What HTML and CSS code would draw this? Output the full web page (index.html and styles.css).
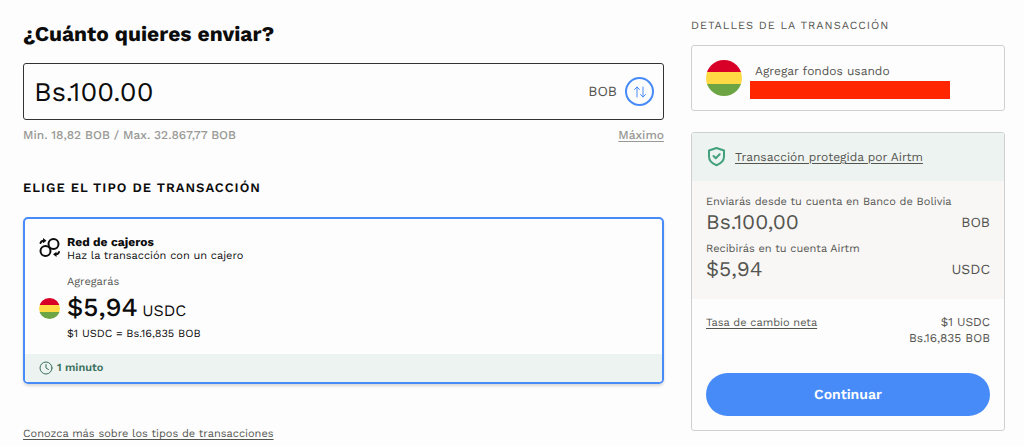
FILE: index.html
```html
<!DOCTYPE html>
<html lang="es">

<head>
    <meta charset="UTF-8">
    <meta name="viewport" content="width=device-width, initial-scale=1.0">
    <title>Agregar fondos</title>
    <link rel="stylesheet" href="styles.css">
</head>

<body>
    <form class="page">
        <main class="send">
            <h1><label for="amount">¿Cuánto quieres enviar?</label></h1>
            <div class="amount-box">
                <input type="text" id="amount" class="amount-input" value="Bs.100.00">
                <span class="currency">BOB</span>
                <button type="button" class="swap" aria-label="Cambiar moneda">
                    <svg width="14" height="14" viewBox="0 0 14 14">
                        <path d="M4 12V2M1.500 4.500L4 2l2.500 2.500M10 2v10M7.500 9.500L10 12l2.500-2.500" />
                    </svg>
                </button>
            </div>
            <div class="hint">
                <span>Min. 18,82 BOB / Max. 32.867,77 BOB</span>
                <a href="#">Máximo</a>
            </div>

            <h2 class="type-title">Elige el tipo de transacción</h2>
            <!-- tipo de transacción -->
            <label class="option">
                <input type="radio" name="type" class="option-radio" checked>
                <span class="option-body">
                    <svg class="network" width="22" height="22" viewBox="0 0 22 22">
                        <circle cx="14.500" cy="6" r="5" />
                        <circle cx="6.500" cy="13" r="5" />
                        <path d="M1.500 5C2 3.500 3 2.700 4.500 2.700M20 14c-.5 1.500-1.500 2.300-3 2.300" />
                        <path class="solid" d="M4 0L7.500 2.700 4 5.300zM17.500 13.700L14 16.300l3.500 2.700z" />
                    </svg>
                    <span class="option-name">
                        <strong>Red de cajeros</strong>
                        <span>Haz la transacción con un cajero</span>
                    </span>
                    <span class="add-label">Agregarás</span>
                    <span class="flag"></span>
                    <span class="add-amount">$5,94 <small>USDC</small></span>
                    <span class="rate">$1 USDC = Bs.16,835 BOB</span>
                </span>
                <span class="option-time">
                    <svg width="14" height="14" viewBox="0 0 14 14">
                        <circle cx="7" cy="7" r="6" />
                        <path d="M7 3.500V7l2.500 1.500" />
                    </svg>
                    1 minuto
                </span>
            </label>
            <a href="#" class="more">Conozca más sobre los tipos de transacciones</a>
        </main>

        <aside class="details">
            <h2 class="details-title">Detalles de la transacción</h2>
            <div class="card method">
                <span class="flag flag-lg"></span>
                <div class="method-text">
                    <p>Agregar fondos usando</p>
                    <div class="account"></div>
                </div>
            </div>

            <div class="card">
                <div class="protected">
                    <svg width="20" height="20" viewBox="0 0 20 20">
                        <path d="M10.500 1L18 3.500v6c0 4.500-3.500 7.200-7.500 8.800C6.500 16.700 3 14 3 9.500v-6z" />
                        <path d="M7.500 9l2.200 2.200L13.700 7.300" />
                    </svg>
                    <a href="#">Transacción protegida por Airtm</a>
                </div>
                <div class="summary">
                    <p class="summary-label">Enviarás desde tu cuenta en Banco de Bolivia</p>
                    <p class="summary-row"><span>Bs.100,00</span> <small>BOB</small></p>
                    <p class="summary-label">Recibirás en tu cuenta Airtm</p>
                    <p class="summary-row"><span>$5,94</span> <small>USDC</small></p>
                </div>
                <div class="confirm">
                    <div class="net-rate">
                        <a href="#">Tasa de cambio neta</a>
                        <p>$1 USDC<br>Bs.16,835 BOB</p>
                    </div>
                    <button type="button" class="continue">Continuar</button>
                </div>
            </div>
        </aside>
    </form>
</body>

</html>
```
FILE: styles.css
```css
* {
    margin: 0;
    padding: 0;
    box-sizing: border-box;
}

body {
    background: #fdfdfd;
    color: #0c0c0c;
    font-family: "Work Sans", Inter, "Liberation Sans", sans-serif;
    font-size: 11px;
    line-height: 16px;
    text-rendering: geometricPrecision;
}

a {
    color: inherit;
    text-underline-offset: 2px;
}

button,
input {
    font-family: inherit;
    text-rendering: inherit;
}

svg {
    fill: none;
    stroke: currentColor;
    stroke-linecap: round;
    stroke-linejoin: round;
}

.page {
    display: grid;
    grid-template-columns: minmax(0, 1fr) 314px;
    gap: 27px;
    align-items: start;
    padding: 0 19px 0 23px;
}

.send {
    padding-top: 21px;
}

h1 {
    margin-bottom: 14px;
    font-size: 21px;
    font-weight: 700;
    line-height: 28px;
}

.amount-box {
    display: flex;
    align-items: center;
    height: 57px;
    padding: 0 9px 0 10px;
    border: 1px solid #333;
    border-radius: 3px;
}

.amount-input {
    flex: 1;
    min-width: 0;
    border: 0;
    outline: none;
    background: none;
    color: #0c0c0c;
    font-size: 27px;
}

.currency {
    margin-right: 8px;
    color: #555550;
    font-size: 14px;
}

.swap {
    display: flex;
    align-items: center;
    justify-content: center;
    width: 29px;
    height: 29px;
    border: 2px solid #478bf9;
    border-radius: 50%;
    background: none;
    color: #478bf9;
}

.hint {
    display: flex;
    justify-content: space-between;
    margin-top: 7px;
    color: #999995;
    font-size: 12px;
    font-weight: 500;
}

.type-title {
    margin: 36px 0 18px;
    font-size: 13px;
    font-weight: 600;
    line-height: 20px;
    letter-spacing: 1px;
    text-transform: uppercase;
}

.option {
    display: block;
    position: relative;
    border: 2px solid #478bf9;
    border-radius: 5px;
    box-shadow: 0 2px 3px rgba(0, 0, 0, .15);
    overflow: hidden;
    cursor: pointer;
}

.option-radio {
    position: absolute;
    opacity: 0;
}

.option-body {
    display: grid;
    grid-template-columns: 22px 1fr;
    column-gap: 6px;
    align-items: center;
    padding: 16px 14px 13px;
    line-height: 14px;
}

.network {
    stroke-width: 2;
}

.network .solid {
    fill: currentColor;
    stroke: none;
}

.option-name strong,
.option-name span {
    display: block;
}

.option-name strong {
    font-size: 12px;
    font-weight: 700;
}

.add-label {
    grid-column: 2;
    margin-top: 12px;
    color: #555550;
}

.add-amount {
    margin-top: 3px;
    font-size: 26px;
    font-weight: 500;
    line-height: 32px;
}

.add-amount small {
    margin-left: -4px;
    font-size: 16px;
    font-weight: 400;
}

.rate {
    grid-column: 2;
}

.flag {
    width: 21px;
    height: 21px;
    border-radius: 50%;
    background: linear-gradient(#d80027 33.3%, #ffda44 33.3% 66.6%, #6da544 66.6%);
}

.flag-lg {
    width: 36px;
    height: 36px;
}

.option-time {
    display: flex;
    align-items: center;
    gap: 4px;
    height: 28px;
    padding: 0 14px;
    background: #edf3f1;
    color: #38705c;
    font-weight: 600;
}

.more {
    display: inline-block;
    margin-top: 42px;
    color: #555550;
}

.details {
    padding-top: 18px;
    color: #555550;
}

.details-title {
    margin-bottom: 11px;
    font-size: 11px;
    font-weight: 400;
    line-height: 16px;
    letter-spacing: 1px;
    text-transform: uppercase;
}

.card {
    border: 1px solid #d0d0d0;
    border-radius: 3px;
    overflow: hidden;
}

.method {
    display: flex;
    align-items: flex-start;
    gap: 8px;
    height: 66px;
    margin-bottom: 21px;
    padding: 14px;
}

.method-text {
    flex: 1;
    padding-top: 3px;
    font-size: 12px;
}

.method-text p {
    padding-left: 5px;
}

.account {
    width: 200px;
    height: 18px;
    margin-top: 2px;
    background: #ff2600;
}

.protected {
    display: flex;
    align-items: center;
    gap: 9px;
    height: 48px;
    padding: 0 14px;
    background: #edf3f1;
    font-size: 12px;
}

.protected svg {
    color: #42a17c;
    stroke-width: 2;
}

.summary {
    padding: 13px 14px 16px;
    background: #f8f7f6;
}

.summary-row {
    display: flex;
    align-items: center;
    justify-content: space-between;
    font-size: 21px;
    line-height: 26px;
}

.summary-row small {
    font-size: 14px;
}

.summary-row + .summary-label {
    margin-top: 5px;
}

.confirm {
    padding: 15px 14px 14px;
}

.net-rate {
    display: flex;
    align-items: baseline;
    justify-content: space-between;
    margin-bottom: 27px;
}

.net-rate p {
    font-size: 12px;
    text-align: right;
}

.continue {
    display: block;
    width: 100%;
    height: 43px;
    border: 0;
    border-radius: 22px;
    background: #478bf9;
    color: #fff;
    font-size: 14px;
    font-weight: 600;
}
```
